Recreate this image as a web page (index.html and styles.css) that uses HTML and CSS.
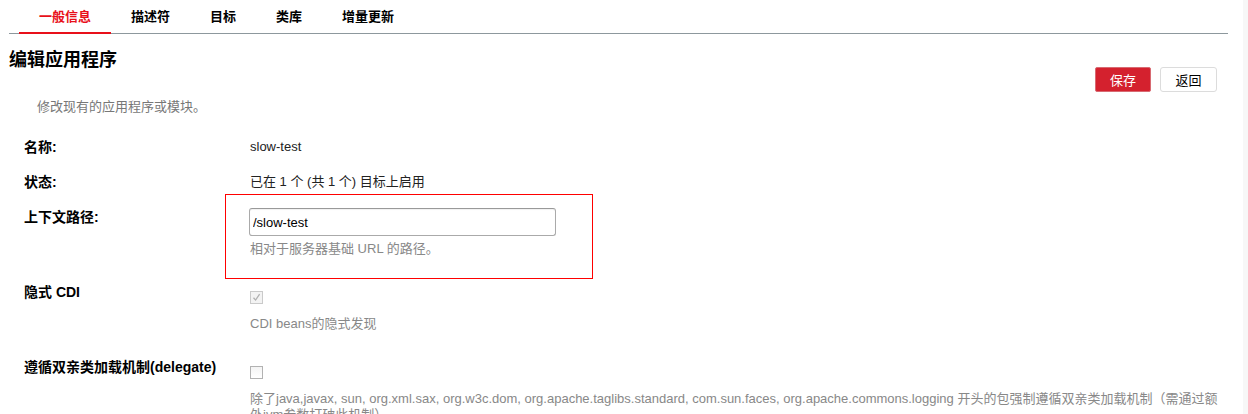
FILE: index.html
```html
<!DOCTYPE html>
<html lang="zh-CN">
<head>
    <meta charset="UTF-8">
    <meta name="viewport" content="width=device-width, initial-scale=1.0">
    <title>编辑应用程序</title>
    <link rel="stylesheet" href="styles.css">
</head>
<body>
    <div class="page">
        <ul class="tabs">
            <li class="active">一般信息</li>
            <li>描述符</li>
            <li>目标</li>
            <li>类库</li>
            <li>增量更新</li>
        </ul>

        <div class="page-header">
            <h1>编辑应用程序</h1>
            <div class="actions">
                <button class="btn btn-primary">保存</button>
                <button class="btn">返回</button>
            </div>
        </div>
        <p class="page-desc">修改现有的应用程序或模块。</p>

        <div class="form">
            <div class="row">
                <div class="label">名称:</div>
                <div class="value">slow-test</div>
            </div>
            <div class="row">
                <div class="label">状态:</div>
                <div class="value">已在 1 个 (共 1 个) 目标上启用</div>
            </div>
            <div class="row">
                <div class="label">上下文路径:</div>
                <div class="value highlighted">
                    <input class="text-input" type="text" value="/slow-test">
                    <div class="hint">相对于服务器基础 URL 的路径。</div>
                    <span class="mark"></span>
                </div>
            </div>
            <div class="row">
                <div class="label">隐式 CDI</div>
                <div class="value">
                    <div class="check-line">
                        <span class="checkbox disabled">
                            <svg width="9" height="9" viewBox="0 0 9 9"><path d="M1.5 4.8 L3.6 7 L7.6 1.2" fill="none" stroke="#b0b0b0" stroke-width="1.3"/></svg>
                        </span>
                    </div>
                    <div class="hint">CDI beans的隐式发现</div>
                </div>
            </div>
            <div class="row">
                <div class="label">遵循双亲类加载机制(delegate)</div>
                <div class="value">
                    <div class="check-line">
                        <span class="checkbox"></span>
                    </div>
                    <div class="hint">除了java,javax, sun, org.xml.sax, org.w3c.dom, org.apache.taglibs.standard, com.sun.faces, org.apache.commons.logging 开头的包强制遵循双亲类加载机制（需通过额外jvm参数打破此机制）</div>
                </div>
            </div>
        </div>
    </div>
</body>
</html>
```

FILE: styles.css
```css
body {
    margin: 0;
    font-family: "Liberation Sans", Arial, "Noto Sans CJK SC", sans-serif;
    font-size: 13px;
    color: #222;
    background: #f7f7f7;
    overflow: hidden;
}

.page {
    background: #fff;
    margin-right: 5px;
    min-height: 100vh;
}

.tabs {
    display: flex;
    list-style: none;
    margin: 0 15px 0 9px;
    padding: 0 0 0 10px;
    height: 33px;
    border-bottom: 1px solid #8d989d;
}

.tabs li {
    padding: 1px 20px 0;
    line-height: 31px;
    font-weight: bold;
    color: #000;
    border-bottom: 2px solid transparent;
    margin-bottom: -1px;
}

.tabs li.active {
    color: #e8101a;
    border-bottom-color: #e8101a;
}

.page-header {
    display: flex;
    justify-content: space-between;
    align-items: flex-start;
    padding: 0 26px 0 9px;
}

.page-header h1 {
    margin: 14px 0 0;
    font-size: 18px;
    line-height: 24px;
    color: #000;
}

.actions {
    display: flex;
    gap: 9px;
    margin-top: 33px;
}

.btn {
    font-family: inherit;
    font-size: 13px;
    height: 25px;
    width: 57px;
    padding: 0;
    background: #fff;
    color: #000;
    border: 1px solid #dcdcdc;
    border-radius: 3px;
}

.btn-primary {
    width: 56px;
    background: #d4212e;
    border-color: #d86a72;
    color: #fff;
    border-radius: 2px;
}

.page-desc {
    margin: 7px 0 0;
    padding-left: 37px;
    line-height: 16px;
    color: #777;
}

.form {
    padding: 23px 20px 0 24px;
}

.row {
    display: flex;
    margin-bottom: 17px;
}

.label {
    width: 226px;
    flex-shrink: 0;
    font-size: 14px;
    font-weight: bold;
    line-height: 18px;
    color: #000;
}

.value {
    flex: 1;
    line-height: 18px;
}

.highlighted {
    position: relative;
}

.mark {
    position: absolute;
    left: -25px;
    top: -14px;
    width: 366px;
    height: 83px;
    border: 1px solid #f00;
}

.text-input {
    display: block;
    box-sizing: border-box;
    width: 307px;
    height: 28px;
    margin-left: -1px;
    padding: 0 3px;
    font-family: inherit;
    font-size: 13px;
    color: #000;
    border: 1px solid #aaa;
    border-top-color: #999;
    border-radius: 3px;
    box-shadow: inset 0 1px 1px rgba(0, 0, 0, 0.06);
    outline: none;
}

.hint {
    margin: 5px 0 9px;
    line-height: 16px;
    color: #888;
}

.check-line {
    height: 28px;
    display: flex;
    align-items: center;
}

.checkbox {
    box-sizing: border-box;
    width: 13px;
    height: 13px;
    margin-top: 1px;
    border: 1px solid #b2b2b2;
    background: linear-gradient(#f4f4f4, #fff);
    display: flex;
    align-items: center;
    justify-content: center;
}

.checkbox.disabled {
    border-color: #cacaca;
    background: #f3f3f3;
}
```
